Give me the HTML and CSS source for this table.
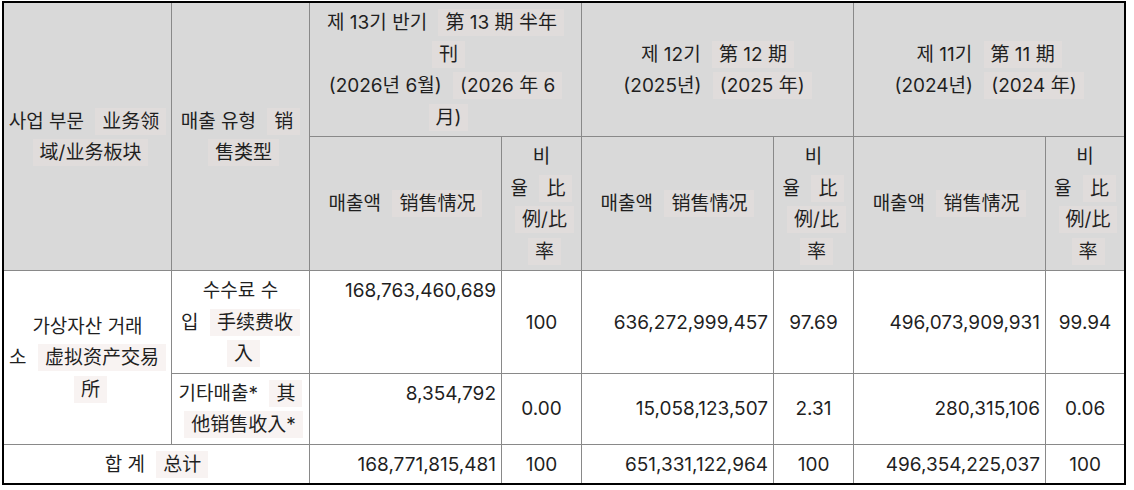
FILE: index.html
```html
<!DOCTYPE html>
<html lang="ko">
<head>
<meta charset="utf-8">
<title>매출 현황</title>
<link rel="stylesheet" href="styles.css">
</head>
<body>
<table class="sales">
  <colgroup>
    <col class="c-seg"><col class="c-type">
    <col class="c-amt"><col class="c-ratio">
    <col class="c-amt"><col class="c-ratio">
    <col class="c-amt"><col class="c-ratio-last">
  </colgroup>
  <thead>
    <tr>
      <th rowspan="2">사업 부문&nbsp;<span class="zh">业务领域/业务板块</span></th>
      <th rowspan="2" class="inset">매출 유형&nbsp;<span class="zh">销售类型</span></th>
      <th colspan="2">제 13기 반기&nbsp;<span class="zh">第 13 期 半年<br>刊</span><br>(2026년 6월)&nbsp;<span class="zh">(2026 年 6<br>月)</span></th>
      <th colspan="2">제 12기&nbsp;<span class="zh">第 12 期</span><br>(2025년)&nbsp;<span class="zh">(2025 年)</span></th>
      <th colspan="2" class="last">제 11기&nbsp;<span class="zh">第 11 期</span><br>(2024년)&nbsp;<span class="zh">(2024 年)</span></th>
    </tr>
    <tr>
      <th>매출액&nbsp;<span class="zh">销售情况</span></th>
      <th class="inset">비율&nbsp;<span class="zh">比例/比率</span></th>
      <th>매출액&nbsp;<span class="zh">销售情况</span></th>
      <th class="inset">비율&nbsp;<span class="zh">比例/比率</span></th>
      <th>매출액&nbsp;<span class="zh">销售情况</span></th>
      <th class="inset last">비율&nbsp;<span class="zh">比例/比率</span></th>
    </tr>
  </thead>
  <tbody>
    <tr>
      <td rowspan="2">가상자산 거래소&nbsp;<span class="zh">虚拟资产交易所</span></td>
      <td class="inset">수수료 수입&nbsp;<span class="zh">手续费收入</span></td>
      <td class="num top">168,763,460,689</td>
      <td>100</td>
      <td class="num">636,272,999,457</td>
      <td>97.69</td>
      <td class="num">496,073,909,931</td>
      <td class="last">99.94</td>
    </tr>
    <tr>
      <td class="inset">기타매출*&nbsp;<span class="zh">其他销售收入*</span></td>
      <td class="num top">8,354,792</td>
      <td>0.00</td>
      <td class="num">15,058,123,507</td>
      <td>2.31</td>
      <td class="num">280,315,106</td>
      <td class="last">0.06</td>
    </tr>
    <tr class="total">
      <td colspan="2">합 계&nbsp;<span class="zh">总计</span></td>
      <td class="num">168,771,815,481</td>
      <td>100</td>
      <td class="num">651,331,122,964</td>
      <td>100</td>
      <td class="num">496,354,225,037</td>
      <td class="last">100</td>
    </tr>
  </tbody>
</table>
</body>
</html>
```

FILE: styles.css
```css
html, body {
  margin: 0;
  background: #ffffff;
}

body {
  padding: 1px 0 0 2px;
  font-family: Inter, "Noto Sans CJK KR", sans-serif;
  font-size: 19px;
  color: #1f1f1f;
}

.sales {
  border-collapse: separate;
  border-spacing: 0;
  table-layout: fixed;
  width: 1124px;
  border: 2px solid #000000;
}

.c-seg { width: 168px; }
.c-type { width: 138px; }
.c-amt { width: 192px; }
.c-ratio { width: 80px; }
.c-ratio-last { width: 78px; }

.sales th,
.sales td {
  border-right: 1px solid #898989;
  border-bottom: 1px solid #898989;
  padding: 4px 3px 3px;
  line-height: 31.5px;
  font-weight: normal;
  text-align: center;
  vertical-align: middle;
}

.sales th {
  background: #d9d9d9;
}

.sales .inset {
  padding-left: 6px;
  padding-right: 6px;
}

.sales .last {
  border-right: 0;
}

.sales .total td {
  border-bottom: 0;
}

.sales .num {
  text-align: right;
  padding-right: 5px;
}

.sales .top {
  vertical-align: top;
}

.zh {
  font-family: Inter, "Noto Sans CJK SC", sans-serif;
  margin-left: 6px;
  padding: 2px 7px;
  background: #f8f3f2;
  -webkit-box-decoration-break: clone;
  box-decoration-break: clone;
}

th .zh {
  background: #e0dcdb;
}
```
